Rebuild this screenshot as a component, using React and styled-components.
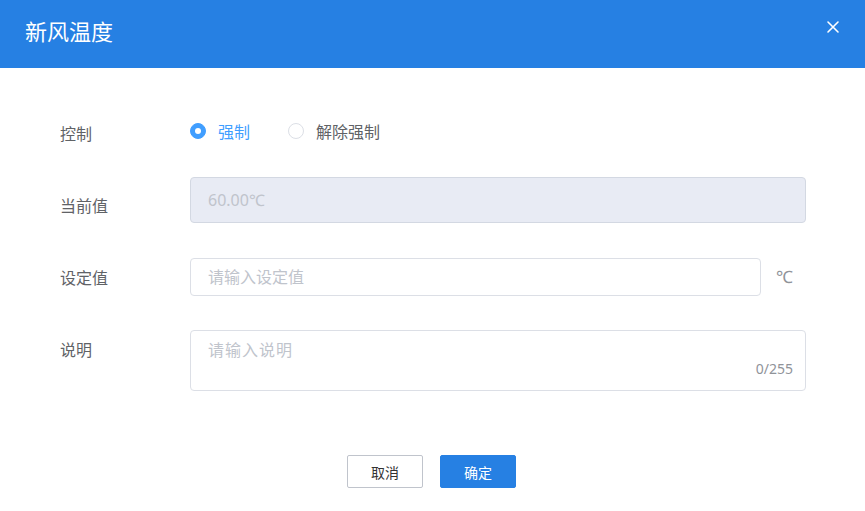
import React, { useState } from "react";
import styled, { createGlobalStyle } from "styled-components";

const Global = createGlobalStyle`
  html, body { margin: 0; padding: 0; background: #fff; }
  body { font-family: "Noto Sans", "Noto Sans CJK SC", sans-serif; }
  * { box-sizing: border-box; }
`;

const Dialog = styled.div`
  width: 865px;
  height: 511px;
  background: #fff;
  display: flex;
  flex-direction: column;
`;

const Header = styled.div`
  height: 68px;
  background: #2680e3;
  display: flex;
  align-items: center;
  justify-content: space-between;
  padding: 0 25px 9px 25px;
`;

const Title = styled.div`
  color: #fff;
  font-size: 22px;
  line-height: 30px;
  font-family: "Noto Sans CJK SC", sans-serif;
`;

const Close = styled.button`
  border: 0;
  background: none;
  padding: 0;
  width: 14px;
  height: 14px;
  display: flex;
  cursor: pointer;
  margin-top: -6px;
`;

const Form = styled.div`
  padding: 44px 59px 0 60px;
  display: flex;
  flex-direction: column;
`;

const Row = styled.div`
  display: flex;
  align-items: flex-start;
  margin-top: ${(p) => p.$gap || 0}px;
`;

const Label = styled.div`
  width: 130px;
  height: ${(p) => p.$h || 38}px;
  flex: none;
  font-family: "Noto Sans CJK SC", sans-serif;
  font-size: 16px;
  color: #606266;
  line-height: 38px;
  padding-top: ${(p) => p.$offset || 0}px;
`;

const RadioGroup = styled.div`
  display: flex;
  align-items: center;
  height: 38px;
  gap: 38px;
`;

const RadioItem = styled.label`
  display: flex;
  align-items: center;
  gap: 12px;
  cursor: pointer;
  font-family: "Noto Sans CJK SC", sans-serif;
  font-size: 16px;
  color: ${(p) => (p.$checked ? "#409eff" : "#606266")};
`;

const RadioDot = styled.span`
  width: 16px;
  height: 16px;
  border-radius: 50%;
  border: 1px solid ${(p) => (p.$checked ? "#409eff" : "#dcdfe6")};
  background: ${(p) => (p.$checked ? "#409eff" : "#fff")};
  display: flex;
  align-items: center;
  justify-content: center;
  &::after {
    content: "";
    width: 6px;
    height: 6px;
    border-radius: 50%;
    background: #fff;
    display: ${(p) => (p.$checked ? "block" : "none")};
  }
`;

const InputBox = styled.div`
  width: ${(p) => p.$width}px;
  height: ${(p) => p.$height}px;
  border: 1px solid ${(p) => (p.$disabled ? "#d3d8e2" : "#dcdfe6")};
  border-radius: 4px;
  background: ${(p) => (p.$disabled ? "#e8ebf4" : "#fff")};
  display: flex;
  align-items: center;
  padding: 0 17px;
  font-size: 16px;
  color: #c0c4cc;
  font-family: "Noto Sans", "Noto Sans CJK SC", sans-serif;
`;

const Input = styled.input`
  border: 0;
  outline: none;
  background: transparent;
  width: 100%;
  font: inherit;
  color: #606266;
  padding: 0;
  &::placeholder { color: #c0c4cc; }
`;

const Unit = styled.span`
  margin-left: 15px;
  line-height: 38px;
  font-size: 17px;
  color: #909399;
`;

const AreaBox = styled.div`
  position: relative;
  width: 617px;
  height: 61px;
  border: 1px solid #dcdfe6;
  border-radius: 4px;
`;

const TextArea = styled.textarea`
  width: 100%;
  height: 100%;
  border: 0;
  outline: none;
  resize: none;
  background: transparent;
  padding: 8px 17px;
  font-family: "Noto Sans CJK SC", sans-serif;
  font-size: 16px;
  line-height: 20px;
  letter-spacing: 1px;
  color: #606266;
  &::placeholder { color: #c0c4cc; }
`;

const Count = styled.span`
  position: absolute;
  right: 12px;
  bottom: 13px;
  font-size: 14px;
  color: #909399;
  line-height: 16px;
`;

const Footer = styled.div`
  display: flex;
  justify-content: center;
  gap: 17px;
  margin-top: 64px;
  padding-right: 2px;
`;

const Button = styled.button`
  width: 76px;
  height: 33px;
  border-radius: 2px;
  font-family: "Noto Sans CJK SC", sans-serif;
  font-size: 14px;
  cursor: pointer;
  border: 1px solid ${(p) => (p.$primary ? "#2680e3" : "#c0c4cc")};
  background: ${(p) => (p.$primary ? "#2680e3" : "#fff")};
  color: ${(p) => (p.$primary ? "#fff" : "#333")};
`;

export default function App() {
  const [mode, setMode] = useState("force");
  return (
    <Dialog>
      <Global />
      <Header>
        <Title>新风温度</Title>
        <Close aria-label="close">
          <svg width="14" height="14" viewBox="0 0 14 14">
            <path d="M2 2 L12 12 M12 2 L2 12" stroke="#fff" strokeWidth="1.6" strokeLinecap="round" />
          </svg>
        </Close>
      </Header>
      <Form>
        <Row>
          <Label $offset={2}>控制</Label>
          <RadioGroup>
            <RadioItem $checked={mode === "force"} onClick={() => setMode("force")}>
              <RadioDot $checked={mode === "force"} />
              强制
            </RadioItem>
            <RadioItem $checked={mode === "release"} onClick={() => setMode("release")}>
              <RadioDot $checked={mode === "release"} />
              解除强制
            </RadioItem>
          </RadioGroup>
        </Row>
        <Row $gap={27}>
          <Label $h={46} $offset={9}>当前值</Label>
          <InputBox $width={617} $height={46} $disabled>60.00℃</InputBox>
        </Row>
        <Row $gap={35}>
          <Label>设定值</Label>
          <InputBox $width={571} $height={38}>
            <Input placeholder="请输入设定值" />
          </InputBox>
          <Unit>℃</Unit>
        </Row>
        <Row $gap={34}>
          <Label>说明</Label>
          <AreaBox>
            <TextArea placeholder="请输入说明" />
            <Count>0/255</Count>
          </AreaBox>
        </Row>
      </Form>
      <Footer>
        <Button>取消</Button>
        <Button $primary>确定</Button>
      </Footer>
    </Dialog>
  );
}
